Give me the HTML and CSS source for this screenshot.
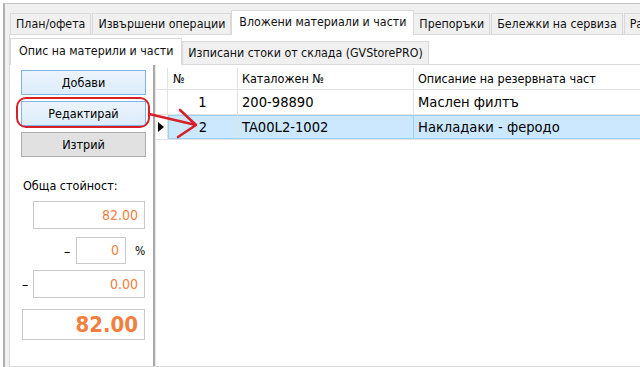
FILE: index.html
```html
<!DOCTYPE html>
<html>
<head>
<meta charset="utf-8">
<link rel="stylesheet" href="styles.css">
</head>
<body>
<div class="window">
  <div class="tabstrip">
    <div class="tab">План/офета</div>
    <div class="tab">Извършени операции</div>
    <div class="tab active">Вложени материали и части</div>
    <div class="tab">Препоръки</div>
    <div class="tab">Бележки на сервиза</div>
    <div class="tab">Разходи</div>
  </div>
  <div class="page">
    <div class="subtabstrip">
      <div class="subtab active">Опис на материли и части</div>
      <div class="subtab">Изписани стоки от склада (GVStorePRO)</div>
    </div>
    <div class="subpage">
      <div class="side">
        <div class="btn focus">Добави</div>
        <div class="btn focus">Редактирай</div>
        <div class="btn">Изтрий</div>
        <div class="total-label">Обща стойност:</div>
        <div class="line end"><div class="field wide">82.00</div></div>
        <div class="line pct"><span class="dash">–</span><div class="field small">0</div><span class="sign">%</span></div>
        <div class="line disc"><span class="dash">–</span><div class="field wide">0.00</div></div>
        <div class="line big-line"><div class="field big">82.00</div></div>
      </div>
      <div class="grid">
        <div class="grow head">
          <div class="rh"></div>
          <div class="c c1">№</div>
          <div class="c c2">Каталожен №</div>
          <div class="c c3">Описание на резервната част</div>
        </div>
        <div class="grow">
          <div class="rh"></div>
          <div class="c c1 num">1</div>
          <div class="c c2">200-98890</div>
          <div class="c c3">Маслен филтъ</div>
        </div>
        <div class="grow sel">
          <div class="rh"><span class="ptr"></span></div>
          <div class="c c1 num">2</div>
          <div class="c c2">TA00L2-1002</div>
          <div class="c c3">Накладаки - феродо</div>
        </div>
      </div>
    </div>
  </div>
  <div class="mark"></div>
  <svg class="arrow" width="640" height="367" viewBox="0 0 640 367">
    <path d="M149 114 L196 125 M180 110 L196 125 L178 137" fill="none" stroke="#d8202a" stroke-width="2.6" stroke-linecap="round" stroke-linejoin="round"/>
  </svg>
</div>
</body>
</html>
```

FILE: styles.css
```css
* { box-sizing: border-box; }
html, body { margin: 0; padding: 0; }
body {
  width: 640px;
  height: 367px;
  overflow: hidden;
  background: #ffffff;
  font-family: "DejaVu Sans Condensed", "DejaVu Sans", sans-serif;
  font-stretch: condensed;
  font-size: 12px;
  color: #000;
}
.window {
  position: relative;
  margin: 3px 0 0 3px;
  height: 364px;
  border-top: 1px solid #c4c4c4;
  border-left: 2px solid #b0b0b0;
  background: #f0f0f0;
  padding-left: 4px;
  display: flex;
  flex-direction: column;
  overflow: hidden;
}
.tabstrip {
  display: flex;
  align-items: flex-end;
  padding: 5px 0 0 1px;
  height: 30px;
  flex: none;
  white-space: nowrap;
}
.tab {
  height: 21px;
  line-height: 20px;
  padding: 0 5px;
  border: 1px solid #d9d9d9;
  border-bottom: none;
  background: #f0f0f0;
  margin-right: 1px;
  color: #111;
  font-size: 12.3px;
}
.tab.active {
  height: 25px;
  line-height: 22px;
  background: #fff;
  margin: 0 -1px -1px -1px;
  padding: 0 7px;
  position: relative;
  z-index: 2;
}
.page {
  flex: 1;
  background: #fff;
  border: 1px solid #d9d9d9;
  border-right: none;
  display: flex;
  flex-direction: column;
  padding-top: 2px;
}
.subtabstrip {
  display: flex;
  align-items: flex-end;
  height: 27px;
  flex: none;
  white-space: nowrap;
}
.subtab {
  height: 23px;
  line-height: 22px;
  padding: 0 5px;
  border: 1px solid #d9d9d9;
  border-bottom: none;
  background: #f0f0f0;
  color: #111;
  font-size: 12.3px;
}
.subtab.active {
  height: 27px;
  line-height: 24px;
  background: #fff;
  padding: 0 8px;
  position: relative;
  z-index: 2;
  margin-bottom: -1px;
}
.subpage {
  flex: 1;
  border-top: 1px solid #d9d9d9;
  display: flex;
}
.side {
  width: 145px;
  flex: none;
  border-right: 2px solid #a9a9a9;
  padding: 5px 0 0 11px;
  display: flex;
  flex-direction: column;
}
.btn {
  width: 125px;
  height: 25px;
  line-height: 23px;
  text-align: center;
  border: 1px solid #adadad;
  background: #e1e1e1;
  margin-bottom: 6px;
  font-size: 12.5px;
}
.btn.focus {
  border-color: #7eb4ea;
  background: linear-gradient(#ecf4fc, #dcecfc);
}
.total-label {
  margin: 15px 0 0 2px;
  font-size: 12.5px;
  height: 16px;
}
.line {
  display: flex;
  align-items: center;
  margin-left: 12px;
}
.line.end { margin-top: 7px; }
.field {
  height: 28px;
  border: 1px solid #c9c9c9;
  background: #fff;
  color: #f08040;
  text-align: right;
  padding-right: 6px;
  line-height: 26px;
  font-size: 14px;
}
.field.wide { width: 112px; }
.field.small { width: 50px; height: 27px; line-height: 25px; }
.line.pct { margin-top: 8px; margin-left: 43px; }
.pct .dash { width: 12px; }
.pct .sign { margin-left: 9px; }
.dash { font-size: 14px; }
.line.disc { margin-top: 6px; margin-left: 1px; }
.disc .dash { width: 11px; }
.line.big-line { margin-top: 11px; margin-left: 1px; }
.field.big {
  width: 123px;
  height: 31px;
  line-height: 29px;
  font-size: 22px;
  font-weight: bold;
  padding-right: 6px;
}
.grid {
  flex: 1;
  padding-top: 3px;
  display: flex;
  flex-direction: column;
  border-left: 1px solid #e8e8e8;
}
.grow {
  display: flex;
  height: 25px;
  border-bottom: 1px solid #e2e2e2;
  white-space: nowrap;
}
.grow.head { height: 22px; }
.rh {
  width: 12px;
  flex: none;
  border-right: 1px solid #e2e2e2;
  position: relative;
}
.c {
  border-right: 1px solid #e2e2e2;
  padding-left: 4px;
  line-height: 24px;
  font-size: 14.6px;
  overflow: hidden;
}
.head .c { font-size: 12.5px; line-height: 21px; }
.c1 { width: 70px; }
.head .c1 { padding-left: 5px; }
.c2 { width: 176px; }
.c3 { flex: 1; border-right: none; }
.num { text-align: center; padding-left: 0; }
.grow.sel .c { background: #cce8ff; border-top: 1px solid #99d1ff; border-bottom: 1px solid #99d1ff; line-height: 22px; }
.grow.sel .c1 { border-left: 1px solid #99d1ff; }
.grow.sel .c2 { border-right-color: #99d1ff; }
.ptr {
  position: absolute;
  left: 2px;
  top: 7px;
  width: 0;
  height: 0;
  border-top: 5px solid transparent;
  border-bottom: 5px solid transparent;
  border-left: 6px solid #000;
}
.mark {
  position: absolute;
  left: 11px;
  top: 93px;
  width: 134px;
  height: 31px;
  border: 2px solid #d8202a;
  border-radius: 10px;
  z-index: 5;
}
.arrow {
  position: absolute;
  left: -5px;
  top: -4px;
  z-index: 6;
}
```
